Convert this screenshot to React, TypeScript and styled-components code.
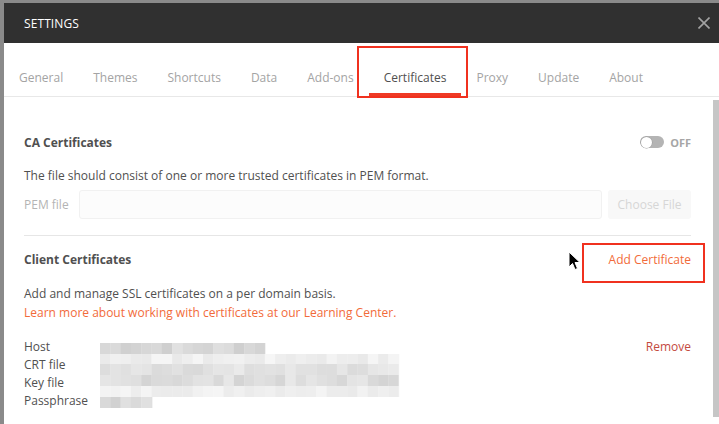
import React from "react";
import styled, { createGlobalStyle } from "styled-components";

const Global = createGlobalStyle`
  html, body { margin: 0; padding: 0; }
  body {
    background: #8a8a8a;
    font-family: "Open Sans", "Noto Sans", sans-serif;
    overflow: hidden;
  }
  #root { height: 424px; }
`;

const Page = styled.div`
  position: relative;
  width: 719px;
  height: 424px;
  padding: 3px 0 0 4px;
  box-sizing: border-box;
  background: #8a8a8a;
`;

const Modal = styled.div`
  position: relative;
  width: 715px;
  height: 421px;
  background: #fff;
  display: flex;
  flex-direction: column;
`;

const Header = styled.div`
  height: 40px;
  background: #303030;
  display: flex;
  align-items: center;
  justify-content: space-between;
  padding: 0 9px 0 20px;
  box-sizing: border-box;
  color: #fff;
  font-size: 12px;
  letter-spacing: 0.1px;
`;

const CloseBtn = styled.div`
  width: 12px;
  height: 12px;
  display: flex;
`;

const TabBar = styled.div`
  height: 54px;
  padding-top: 17px;
  box-sizing: border-box;
  display: flex;
  align-items: flex-end;
  border-bottom: 1px solid #e8e8e8;
`;

const Tab = styled.div<{ $active?: boolean }>`
  height: 36px;
  box-sizing: border-box;
  padding: 1px 15px 0;
  line-height: 33px;
  font-size: 12px;
  color: ${(p) => (p.$active ? "#505050" : "#a4a4a4")};
  border-bottom: 3px solid ${(p) => (p.$active ? "#ef3a25" : "transparent")};
`;

const Body = styled.div`
  flex: 1;
  display: flex;
  min-height: 0;
`;

const Content = styled.div`
  flex: 1;
  padding: 35px 18px 0 20px;
  box-sizing: border-box;
  color: #505050;
  font-size: 12px;
`;

const Scrollbar = styled.div`
  width: 6px;
  margin: 3px 0 7px 4px;
  background: #c6c6c6;
`;

const TitleRow = styled.div<{ $mt?: number }>`
  display: flex;
  align-items: center;
  justify-content: space-between;
  height: 20px;
  margin-top: ${(p) => p.$mt ?? 0}px;
`;

const Title = styled.div`
  font-weight: 700;
  font-size: 12px;
  color: #505050;
`;

const ToggleWrap = styled.div`
  display: flex;
  align-items: center;
  gap: 6px;
`;

const Track = styled.div`
  width: 24px;
  height: 12px;
  border-radius: 6px;
  background: #b4b4b4;
  display: flex;
  align-items: center;
  padding: 0 1px;
  box-sizing: border-box;
`;

const Knob = styled.div`
  width: 11px;
  height: 11px;
  border-radius: 50%;
  background: #fff;
  box-shadow: 0 0 0 0.5px #9a9a9a;
`;

const OffLabel = styled.span`
  font-weight: 700;
  font-size: 11px;
  color: #a6a6a6;
`;

const Text = styled.div<{ $mt?: number; $orange?: boolean }>`
  line-height: 19px;
  margin-top: ${(p) => p.$mt ?? 0}px;
  color: ${(p) => (p.$orange ? "#f26b3a" : "#505050")};
`;

const FileRow = styled.div`
  display: flex;
  align-items: center;
  height: 29px;
  margin-top: 5px;
  gap: 6px;
`;

const MutedLabel = styled.span`
  color: #b4b4b4;
  width: 49px;
`;

const FileInput = styled.div`
  flex: 1;
  height: 29px;
  box-sizing: border-box;
  background: #fcfcfc;
  border: 1px solid #f1f1f1;
  border-radius: 3px;
`;

const ChooseBtn = styled.div`
  width: 83px;
  height: 29px;
  background: #f8f8f8;
  border-radius: 3px;
  color: #d6d6d6;
  display: flex;
  align-items: center;
  justify-content: center;
`;

const Divider = styled.div`
  height: 1px;
  background: #e6e6e6;
  margin-top: 16px;
`;

const OrangeLink = styled.span`
  color: #f26b3a;
`;

const Details = styled.div`
  display: flex;
  margin-top: 16px;
  line-height: 18px;
`;

const Labels = styled.div`
  width: 76px;
  display: flex;
  flex-direction: column;
`;

const Values = styled.div`
  flex: 1;
  padding-top: 3px;
`;

const Remove = styled.span`
  color: #c44a3e;
`;

const Annotation = styled.div<{ $x: number; $y: number; $w: number; $h: number }>`
  position: absolute;
  left: ${(p) => p.$x}px;
  top: ${(p) => p.$y}px;
  width: ${(p) => p.$w}px;
  height: ${(p) => p.$h}px;
  border: 2px solid #f0311f;
  box-sizing: border-box;
  pointer-events: none;
`;

const Cursor = styled.svg`
  position: absolute;
  left: 568px;
  top: 251px;
`;

function rand(seed: number) {
  let s = seed;
  return () => {
    s = (s * 9301 + 49297) % 233280;
    return s / 233280;
  };
}

const Mosaic: React.FC = () => {
  const r = rand(7);
  const rows = [
    { y: 2, h: 11, w: 165, base: 212, spread: 22 },
    { y: 13, h: 10, w: 299, base: 236, spread: 14 },
    { y: 23, h: 11, w: 299, base: 222, spread: 18 },
    { y: 34, h: 11, w: 299, base: 218, spread: 20 },
    { y: 45, h: 11, w: 299, base: 238, spread: 12 },
    { y: 56, h: 11, w: 52, base: 215, spread: 20 },
  ];
  const rects: React.ReactNode[] = [];
  rows.forEach((row, ri) => {
    const cells = Math.ceil(row.w / 10.3);
    for (let i = 0; i < cells; i++) {
      const x = i * 10.3;
      const w = Math.min(10.3, row.w - x);
      let v = Math.round(row.base + (r() - 0.3) * row.spread);
      if (i === cells - 1 && ri > 0 && ri < 5) v = Math.max(v, 244);
      v = Math.min(252, v);
      rects.push(
        <rect key={`${ri}-${i}`} x={x} y={row.y} width={w + 0.3} height={row.h} fill={`rgb(${v},${v},${v})`} />
      );
    }
  });
  return (
    <svg width="300" height="70" viewBox="0 0 300 70">
      {rects}
    </svg>
  );
};

const tabs = ["General", "Themes", "Shortcuts", "Data", "Add-ons", "Certificates", "Proxy", "Update", "About"];

export default function App() {
  return (
    <>
      <Global />
      <Page>
        <Modal>
          <Header>
            <span>SETTINGS</span>
            <CloseBtn>
              <svg width="12" height="12" viewBox="0 0 12 12">
                <path d="M0.5 0.5 L11.5 11.5 M11.5 0.5 L0.5 11.5" stroke="#a2a2a2" strokeWidth="1.6" />
              </svg>
            </CloseBtn>
          </Header>
          <TabBar>
            {tabs.map((t) => (
              <Tab key={t} $active={t === "Certificates"}>
                {t}
              </Tab>
            ))}
          </TabBar>
          <Body>
            <Content>
              <TitleRow>
                <Title>CA Certificates</Title>
                <ToggleWrap>
                  <Track>
                    <Knob />
                  </Track>
                  <OffLabel>OFF</OffLabel>
                </ToggleWrap>
              </TitleRow>
              <Text $mt={14}>The file should consist of one or more trusted certificates in PEM format.</Text>
              <FileRow>
                <MutedLabel>PEM file</MutedLabel>
                <FileInput />
                <ChooseBtn>Choose File</ChooseBtn>
              </FileRow>
              <Divider />
              <TitleRow $mt={13}>
                <Title>Client Certificates</Title>
                <OrangeLink>Add Certificate</OrangeLink>
              </TitleRow>
              <Text $mt={15}>Add and manage SSL certificates on a per domain basis.</Text>
              <Text $orange>Learn more about working with certificates at our Learning Center.</Text>
              <Details>
                <Labels>
                  <span>Host</span>
                  <span>CRT file</span>
                  <span>Key file</span>
                  <span>Passphrase</span>
                </Labels>
                <Values>
                  <Mosaic />
                </Values>
                <Remove>Remove</Remove>
              </Details>
            </Content>
            <Scrollbar />
          </Body>
        </Modal>
        <Annotation $x={357} $y={46} $w={111} $h={52} />
        <Annotation $x={582} $y={243} $w={123} $h={40} />
        <Cursor width="13" height="20" viewBox="0 0 13 20">
          <path d="M1 1 L1 16 L4.5 12.5 L7 18.5 L9.5 17.5 L7 11.5 L12 11.5 Z" fill="#000" stroke="#fff" strokeWidth="1" strokeLinejoin="round" />
        </Cursor>
      </Page>
    </>
  );
}
